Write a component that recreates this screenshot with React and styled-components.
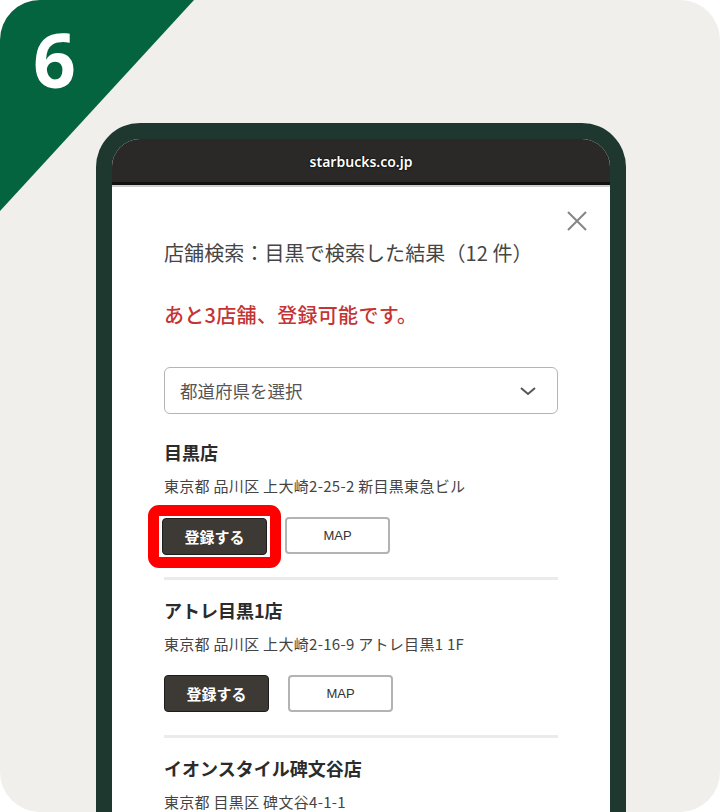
import React from "react";
import styled, { createGlobalStyle } from "styled-components";

const GlobalStyle = createGlobalStyle`
    html, body {
        margin: 0;
        padding: 0;
        background: #ffffff;
    }
    body {
        font-family: "Noto Sans CJK JP", "Noto Sans", sans-serif;
    }
`;

const Card = styled.div`
    position: relative;
    width: 720px;
    height: 812px;
    box-sizing: border-box;
    padding: 123px 94px 0 96px;
    background: #f0efeb;
    border-radius: 40px;
    overflow: hidden;
`;

const StepBadge = styled.div`
    position: absolute;
    top: 0;
    left: 0;
    width: 194px;
    height: 211px;
    background: #03643f;
    clip-path: polygon(0 0, 100% 0, 0 100%);
`;

const StepNumber = styled.span`
    position: absolute;
    top: 22px;
    left: 33px;
    color: #ffffff;
    font-family: "Open Sans", "Noto Sans", sans-serif;
    font-weight: 700;
    font-size: 75px;
    line-height: 1;
`;

const Phone = styled.div`
    height: 100%;
    box-sizing: border-box;
    border: 16px solid #1e3830;
    border-bottom: none;
    border-radius: 44px 44px 0 0;
    background: #ffffff;
    overflow: hidden;
    display: flex;
    flex-direction: column;
`;

const UrlBar = styled.div`
    height: 41px;
    flex-shrink: 0;
    background: #2a2927;
    border-bottom: 3px solid #111111;
    box-shadow: 0 2px 0 #cfcfcf;
    display: flex;
    align-items: center;
    justify-content: center;
    color: #ffffff;
    font-family: "Noto Sans", "DejaVu Sans", sans-serif;
    font-weight: 600;
    font-size: 14px;
    text-shadow: 0 0 2px #000000, 0 0 1px #000000;
    padding-top: 2px;
`;

const Content = styled.div`
    flex: 1;
    padding: 25px 52px 0 52px;
    display: flex;
    flex-direction: column;
`;

const CloseRow = styled.div`
    display: flex;
    justify-content: flex-end;
    margin-right: -30px;
    height: 21px;
`;

const Title = styled.h1`
    margin: 8px 0 0;
    font-size: 20px;
    font-weight: 400;
    line-height: 28px;
    color: #454545;
    letter-spacing: 0.1px;
`;

const Notice = styled.p`
    margin: 34px 0 0;
    font-size: 20px;
    font-weight: 500;
    line-height: 28px;
    color: #c43434;
    letter-spacing: 0.3px;
`;

const Select = styled.div`
    margin-top: 38px;
    height: 47px;
    box-sizing: border-box;
    border: 1.5px solid #b5b5b5;
    border-radius: 6px;
    display: flex;
    align-items: center;
    justify-content: space-between;
    padding: 0 20px 0 15px;
    font-size: 17.5px;
    color: #555555;
`;

const Store = styled.div`
    padding: ${(props) => (props.first ? "25px" : "17px")} 0 23px;
    border-bottom: 3px solid #ebebeb;
`;

const StoreName = styled.h2`
    margin: 0;
    font-size: 18px;
    font-weight: 700;
    line-height: 26px;
    color: #2b2b2b;
`;

const Address = styled.p`
    margin: 10px 0 0;
    font-size: 15px;
    line-height: 22px;
    color: #444444;
    letter-spacing: 0.3px;
`;

const Actions = styled.div`
    margin-top: 20px;
    display: flex;
    align-items: center;
    gap: 19px;
`;

const Highlight = styled.div`
    margin: -14px -15px -15px -16px;
    padding: 2px 3px;
    border: 11px solid #ff0000;
    border-radius: 11px;
    display: flex;
`;

const Button = styled.button`
    width: 105px;
    height: 37px;
    box-sizing: border-box;
    border-radius: 4px;
    font-family: ${(props) =>
        props.type === "primary"
            ? '"Noto Sans CJK JP", sans-serif'
            : '"Liberation Sans", sans-serif'};
    font-size: ${(props) => (props.type === "primary" ? "15px" : "13px")};
    font-weight: ${(props) => (props.type === "primary" ? 700 : 400)};
    color: ${(props) => (props.type === "primary" ? "#ffffff" : "#333333")};
    background: ${(props) => (props.type === "primary" ? "#3d3934" : "#ffffff")};
    border: ${(props) =>
        props.type === "primary" ? "1.5px solid #1f1d1b" : "2px solid #b3b3b3"};
    padding: 0;
    cursor: pointer;
`;

const CloseIcon = () => (
    <svg width="22" height="22" viewBox="0 0 22 22">
        <path d="M2 2 L20 20 M20 2 L2 20" stroke="#858585" strokeWidth="2" fill="none" />
    </svg>
);

const Chevron = () => (
    <svg width="18" height="10" viewBox="0 0 18 10">
        <path d="M2 2 L9 8 L16 2" stroke="#555555" strokeWidth="2" fill="none" />
    </svg>
);

const stores = [
    { name: "目黒店", address: "東京都 品川区 上大崎2-25-2 新目黒東急ビル", highlight: true },
    { name: "アトレ目黒1店", address: "東京都 品川区 上大崎2-16-9 アトレ目黒1 1F" },
    { name: "イオンスタイル碑文谷店", address: "東京都 目黒区 碑文谷4-1-1" },
];

const StoreItem = ({ store, first }) => {
    const register = <Button type="primary">登録する</Button>;
    return (
        <Store first={first}>
            <StoreName>{store.name}</StoreName>
            <Address>{store.address}</Address>
            <Actions>
                {store.highlight ? <Highlight>{register}</Highlight> : register}
                <Button type="normal">MAP</Button>
            </Actions>
        </Store>
    );
};

export default function App() {
    return (
        <>
            <GlobalStyle />
            <Card>
                <StepBadge />
                <StepNumber>6</StepNumber>
                <Phone>
                    <UrlBar>starbucks.co.jp</UrlBar>
                    <Content>
                        <CloseRow>
                            <CloseIcon />
                        </CloseRow>
                        <Title>店舗検索：目黒で検索した結果（12 件）</Title>
                        <Notice>あと3店舗、登録可能です。</Notice>
                        <Select>
                            <span>都道府県を選択</span>
                            <Chevron />
                        </Select>
                        {stores.map((s, i) => (
                            <StoreItem key={s.name} store={s} first={i === 0} />
                        ))}
                    </Content>
                </Phone>
            </Card>
        </>
    );
}
